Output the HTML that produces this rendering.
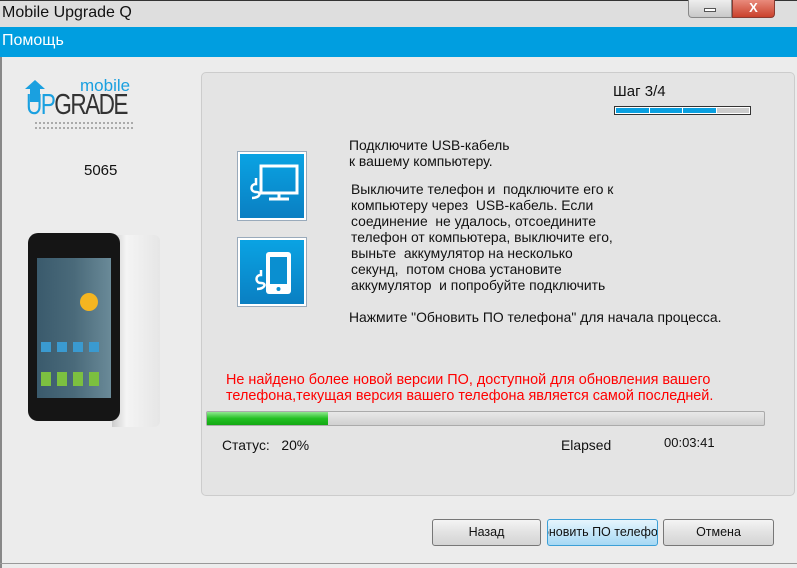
<!DOCTYPE html>
<html><head><meta charset="utf-8"><style>
*{margin:0;padding:0;box-sizing:border-box}
body{width:797px;height:568px;overflow:hidden;background:#ececec;font-family:"Liberation Sans",sans-serif;position:relative;color:#111}
.a{position:absolute}
.t{font-size:13.9px;white-space:nowrap;line-height:16px}
.btn{position:absolute;top:519px;height:27px;border:1px solid #777;border-radius:3px;background:linear-gradient(#f4f4f4,#e2e2e2 50%,#d4d4d4);font-size:12.5px;text-align:center;line-height:25px;white-space:nowrap;overflow:hidden}
.ic{position:absolute;width:68px;height:68px;background:linear-gradient(#0aa3e3,#0a7fc2);border:2px solid #fff;outline:1px solid #9ab}
</style></head><body>
<div class="a" style="left:0;top:0;width:797px;height:27px;background:#dedede;border-top:1px solid #333"></div>
<div class="a t" style="left:2px;top:4px;font-size:16px;line-height:18px">Mobile Upgrade Q</div>
<div class="a" style="left:688px;top:0;width:44px;height:18px;border:1px solid #888;border-top:none;border-radius:0 0 0 4px;background:linear-gradient(#eee,#c8c8c8)"><div class="a" style="left:15px;top:8px;width:12px;height:4px;border:1px solid #555;background:#fff"></div></div>
<div class="a" style="left:732px;top:0;width:43px;height:18px;border:1px solid #8a3a30;border-top:none;border-radius:0 0 4px 0;background:linear-gradient(#e98b7c,#c9412c);color:#fff;font-weight:bold;font-size:13px;text-align:center;line-height:15px">X</div>
<div class="a" style="left:0;top:27px;width:797px;height:30px;background:#009ee0"></div>
<div class="a t" style="left:2px;top:32px;color:#fff;font-size:16px;line-height:18px">Помощь</div>
<div class="a" style="left:0;top:57px;width:2px;height:511px;background:#888"></div>
<div class="a" style="left:0;top:563px;width:797px;height:1px;background:#999"></div>
<!-- logo -->
<svg class="a" style="left:25px;top:80px" width="20" height="22"><path d="M10 0L20 9H15V22H5V9H0Z" fill="#1aa0e0"/></svg>
<div class="a" style="left:80px;top:78px;font-size:17px;color:#1aa0e0;line-height:16px">mobile</div>
<div class="a" style="left:26px;top:91px;font-size:29px;line-height:28px;letter-spacing:-2px;transform:scaleX(.78);transform-origin:left"><span style="color:#1aa0e0">UP</span><span style="color:#333">GRADE</span></div>
<div class="a" style="left:35px;top:122px;width:98px;height:7px;border-top:2px dotted #aaa;border-bottom:2px dotted #aaa"></div>
<div class="a t" style="left:84px;top:163px;font-size:15px">5065</div>
<!-- phone -->
<div class="a" style="left:112px;top:235px;width:48px;height:192px;background:linear-gradient(90deg,#ccc,#f4f4f4 30%,#e6e6e6);border-radius:0 6px 6px 0"></div>
<div class="a" style="left:28px;top:233px;width:92px;height:188px;background:#151515;border-radius:10px"></div>
<div class="a" style="left:37px;top:258px;width:74px;height:140px;background:linear-gradient(90deg,#3a5a6c,#4a6a7a 50%,#6a8a98)"></div>
<div class="a" style="left:80px;top:293px;width:18px;height:18px;border-radius:50%;background:#f5b520"></div>
<div class="a" style="left:41px;top:342px;width:62px;height:10px;background:repeating-linear-gradient(90deg,#3a9ad0 0 10px,transparent 10px 16px)"></div>
<div class="a" style="left:41px;top:372px;width:62px;height:14px;background:repeating-linear-gradient(90deg,#7cc040 0 10px,transparent 10px 16px)"></div>
<!-- panel -->
<div class="a" style="left:201px;top:72px;width:594px;height:424px;background:#e4e4e4;border:1px solid #ccc;border-radius:5px"></div>
<div class="a t" style="left:613px;top:84px;font-size:15px;line-height:16px">Шаг 3/4</div>
<div class="a" style="left:614px;top:106px;width:137px;height:9px;border:1px solid #333;background:#fff;display:flex;gap:1px;padding:1px">
<div style="flex:1;background:#0aa0e0"></div><div style="flex:1;background:#0aa0e0"></div><div style="flex:1;background:#0aa0e0"></div><div style="flex:1;background:#ccc"></div></div>
<div class="ic" style="left:238px;top:152px"><svg width="64" height="64"><rect x="21" y="12" width="36" height="27" fill="none" stroke="#fff" stroke-width="3"/><path d="M29 45H49M39 40V45" stroke="#fff" stroke-width="3"/><path d="M16 24v6c-6 0-6 8 0 8s4 6-4 6" fill="none" stroke="#fff" stroke-width="2.5"/></svg></div>
<div class="ic" style="left:238px;top:238px"><svg width="64" height="64"><rect x="26" y="12" width="25" height="42" rx="3" fill="#fff"/><rect x="30" y="17" width="17" height="27" fill="#0a8fd0"/><circle cx="38.5" cy="49" r="2" fill="#0a8fd0"/><path d="M21 30v5c-6 0-6 8 0 8s4 6-4 6" fill="none" stroke="#fff" stroke-width="2.5"/></svg></div>
<div class="a t" style="left:349px;top:137px">Подключите USB-кабель<br>к вашему компьютеру.</div>
<div class="a t" style="left:351px;top:181px">Выключите телефон и&nbsp; подключите его к<br>компьютеру через&nbsp; USB-кабель. Если<br>соединение&nbsp; не удалось, отсоедините<br>телефон от компьютера, выключите его,<br>выньте&nbsp; аккумулятор на несколько<br>секунд,&nbsp; потом снова установите<br>аккумулятор&nbsp; и попробуйте подключить</div>
<div class="a t" style="left:349px;top:309px">Нажмите "Обновить ПО телефона" для начала процесса.</div>
<div class="a t" style="left:226px;top:372px;color:#f00;font-size:14.4px">Не найдено более новой версии ПО, доступной для обновления вашего<br>телефона,текущая версия вашего телефона является самой последней.</div>
<div class="a" style="left:206px;top:411px;width:559px;height:15px;border:1px solid #aaa;border-radius:2px;background:linear-gradient(#e8e8e8,#d0d0d0)"><div style="width:121px;height:100%;background:linear-gradient(#8fe88f,#22c022 50%,#12a812)"></div></div>
<div class="a t" style="left:222px;top:437px">Статус:&nbsp;&nbsp; 20%</div>
<div class="a t" style="left:561px;top:437px">Elapsed</div>
<div class="a t" style="left:664px;top:435px;font-size:13px">00:03:41</div>
<div class="btn" style="left:432px;width:109px">Назад</div>
<div class="btn" style="left:547px;width:111px;border-color:#3c9fd6;background:linear-gradient(#e6f5fd,#c6e7f9 50%,#a6d8f4);text-align:left"><span style="position:absolute;left:-16px;top:0">Обновить ПО телефона</span></div>
<div class="btn" style="left:663px;width:111px">Отмена</div>
</body></html>
